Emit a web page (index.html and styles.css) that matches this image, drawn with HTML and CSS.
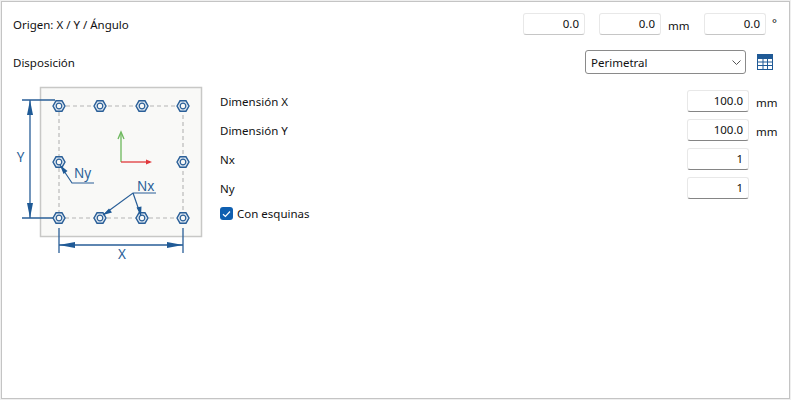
FILE: index.html
```html
<!DOCTYPE html>
<html lang="en">
<head>
  <meta charset="UTF-8" />
  <title>Disposición</title>
  <link rel="stylesheet" href="styles.css">
</head>
<body>
  <div class="panel">
    <div class="row origin-row">
      <span class="label">Origen: X / Y / Ángulo</span>
      <div class="origin-fields">
        <span class="field light">0.0</span>
        <span class="field light second">0.0</span>
        <span class="unit">mm</span>
        <span class="field light">0.0</span>
        <span class="unit degree">°</span>
      </div>
    </div>

    <div class="row layout-row">
      <span class="label">Disposición</span>
      <div class="select-group">
        <div class="select">
          <span>Perimetral</span>
          <svg class="chevron" width="9" height="5" viewBox="0 0 9 5"><path d="M0.5 0.5 L4.5 4.5 L8.5 0.5" fill="none" stroke="#555" stroke-width="1"/></svg>
        </div>
        <svg class="table-icon" width="16" height="16" viewBox="0 0 16 16">
          <rect width="16" height="16" fill="#1f5a96"/>
          <rect x="1" y="5" width="4.5" height="2.5" fill="#fff"/>
          <rect x="6.5" y="5" width="3.5" height="2.5" fill="#fff"/>
          <rect x="11" y="5" width="4" height="2.5" fill="#fff"/>
          <rect x="1" y="8.5" width="4.5" height="2.5" fill="#fff"/>
          <rect x="6.5" y="8.5" width="3.5" height="2.5" fill="#fff"/>
          <rect x="11" y="8.5" width="4" height="2.5" fill="#fff"/>
          <rect x="1" y="12" width="4.5" height="3" fill="#fff"/>
          <rect x="6.5" y="12" width="3.5" height="3" fill="#fff"/>
          <rect x="11" y="12" width="4" height="3" fill="#fff"/>
        </svg>
      </div>
    </div>

    <div class="content">
      <svg class="diagram" width="200" height="190" viewBox="10 80 200 190">
        <defs>
          <g id="bolt">
            <path d="M-6 0 L-3 -5.2 L3 -5.2 L6 0 L3 5.2 L-3 5.2 Z" fill="#dfe8f1" stroke="#2a5f98" stroke-width="1.4"/>
            <circle r="2.8" fill="#f8f8f6" stroke="#2a5f98" stroke-width="1.2"/>
          </g>
        </defs>
        <rect x="40.5" y="87.5" width="161" height="149" fill="#f9f9f7" stroke="#c8c8c6" stroke-width="1.5"/>
        <rect x="59" y="106" width="124" height="112" fill="none" stroke="#b5b5b5" stroke-width="1.1" stroke-dasharray="4 3"/>

        <use href="#bolt" x="59" y="106"/>
        <use href="#bolt" x="100" y="106"/>
        <use href="#bolt" x="142" y="106"/>
        <use href="#bolt" x="183" y="106"/>
        <use href="#bolt" x="59" y="162"/>
        <use href="#bolt" x="183" y="162"/>
        <use href="#bolt" x="59" y="218"/>
        <use href="#bolt" x="100" y="218"/>
        <use href="#bolt" x="142" y="218"/>
        <use href="#bolt" x="183" y="218"/>

        <!-- axes -->
        <path d="M121 162 V134" stroke="#6cb85c" stroke-width="1.3" fill="none"/>
        <path d="M118 139 L121 132 L124 139" stroke="#6cb85c" stroke-width="1.3" fill="none"/>
        <path d="M121 162 H150" stroke="#e0383c" stroke-width="1.3" fill="none"/>
        <path d="M146 159.5 L152 162 L146 164.5 Z" fill="#e0383c"/>

        <!-- Y dimension -->
        <path d="M22 100 H55 M22 218 H53 M30 100 V218" stroke="#2a5f98" stroke-width="1.3" fill="none"/>
        <path d="M30 100 L33 115 H27 Z M30 218 L33 203 H27 Z" fill="#1f5a96"/>
        <text class="dim" x="20.5" y="162" text-anchor="middle">Y</text>

        <!-- X dimension -->
        <path d="M59 228 V253 M183 228 V253 M59 245 H183" stroke="#2a5f98" stroke-width="1.3" fill="none"/>
        <path d="M59 245 L75 242 V248 Z M183 245 L167 242 V248 Z" fill="#1f5a96"/>
        <text class="dim" x="122" y="259" text-anchor="middle">X</text>

        <!-- Ny leader -->
        <path d="M94 183 H72 L60 165" stroke="#2a5f98" stroke-width="1.2" fill="none"/>
        <path d="M60 165 L67.5 171 L63.5 174 Z" fill="#1f5a96"/>
        <text class="dim" x="74" y="178">Ny</text>

        <!-- Nx leader -->
        <path d="M156 193 H133 L103 215 M133 193 L141 216" stroke="#2a5f98" stroke-width="1.2" fill="none"/>
        <path d="M103 215 L109 208.5 L112 212.5 Z M141 216 L136.5 207.5 L141.5 206.5 Z" fill="#1f5a96"/>
        <text class="dim" x="137" y="191">Nx</text>
      </svg>

      <div class="form">
        <div class="form-row"><span class="label">Dimensión X</span><span class="field">100.0</span><span class="unit">mm</span></div>
        <div class="form-row"><span class="label">Dimensión Y</span><span class="field">100.0</span><span class="unit">mm</span></div>
        <div class="form-row"><span class="label">Nx</span><span class="field">1</span><span class="unit"></span></div>
        <div class="form-row"><span class="label">Ny</span><span class="field">1</span><span class="unit"></span></div>
        <div class="check-row">
          <span class="checkbox">
            <svg width="9" height="8" viewBox="0 0 9 8"><path d="M1 4.2 L3.4 6.5 L8 1.5" fill="none" stroke="#fff" stroke-width="1.2"/></svg>
          </span>
          <span class="label">Con esquinas</span>
        </div>
      </div>
    </div>
  </div>
</body>
</html>
```

FILE: styles.css
```css
html, body {
  margin: 0;
  background: #fff;
}
body {
  width: 791px;
  height: 400px;
  overflow: hidden;
  font-family: "Noto Sans", "Open Sans", sans-serif;
  font-size: 11.5px;
  color: #111;
}
.panel {
  box-sizing: border-box;
  width: 789px;
  height: 398px;
  margin: 1px 0 0 1px;
  border: 1px solid #c4c4c4;
  box-shadow: 0 0 0 1px #efefef;
  padding: 11px 0 0 11px;
}
.row {
  display: flex;
  align-items: center;
  justify-content: space-between;
}
.origin-fields {
  display: flex;
  align-items: center;
  padding-right: 13px;
}
.field {
  box-sizing: border-box;
  flex: none;
  width: 62px;
  height: 22px;
  line-height: 20px;
  padding-right: 5px;
  text-align: right;
  background: #fff;
  border: 1px solid #e8e8e8;
  border-bottom-color: #858585;
  border-radius: 3px;
  display: block;
}
.field.light {
  border-bottom-color: #c6c6c6;
}
.origin-fields .second {
  margin-left: 14px;
}
.unit {
  box-sizing: border-box;
  width: 43px;
  padding: 2px 0 0 7px;
}
.form-row .unit {
  width: 31px;
}
.unit.degree {
  width: 10px;
  padding: 0 0 4px 6px;
}
.layout-row {
  margin-top: 15px;
  height: 24px;
}
.select-group {
  display: flex;
  align-items: center;
  padding-right: 16px;
}
.select {
  box-sizing: border-box;
  width: 161px;
  height: 24px;
  padding: 0 4px 0 5px;
  border: 1px solid #8a8a8a;
  border-radius: 3px;
  display: flex;
  align-items: center;
  justify-content: space-between;
}
.table-icon {
  margin-left: 11px;
}
.content {
  display: flex;
  margin-left: -3px;
  margin-top: 6px;
}
.diagram {
  display: block;
  flex: none;
}
.dim {
  font-family: "Noto Sans", sans-serif;
  font-size: 13.5px;
  fill: #2a5f98;
}
.form {
  width: 560px;
  margin-left: 10px;
  padding-top: 10px;
}
.form-row {
  display: flex;
  align-items: center;
  height: 22px;
  margin-bottom: 7px;
}
.form-row .label {
  width: 469px;
}
.check-row {
  display: flex;
  align-items: center;
}
.checkbox {
  box-sizing: border-box;
  width: 13px;
  height: 13px;
  border-radius: 3px;
  background: #0f5fb0;
  display: flex;
  align-items: center;
  justify-content: center;
  margin-right: 4px;
}
```
